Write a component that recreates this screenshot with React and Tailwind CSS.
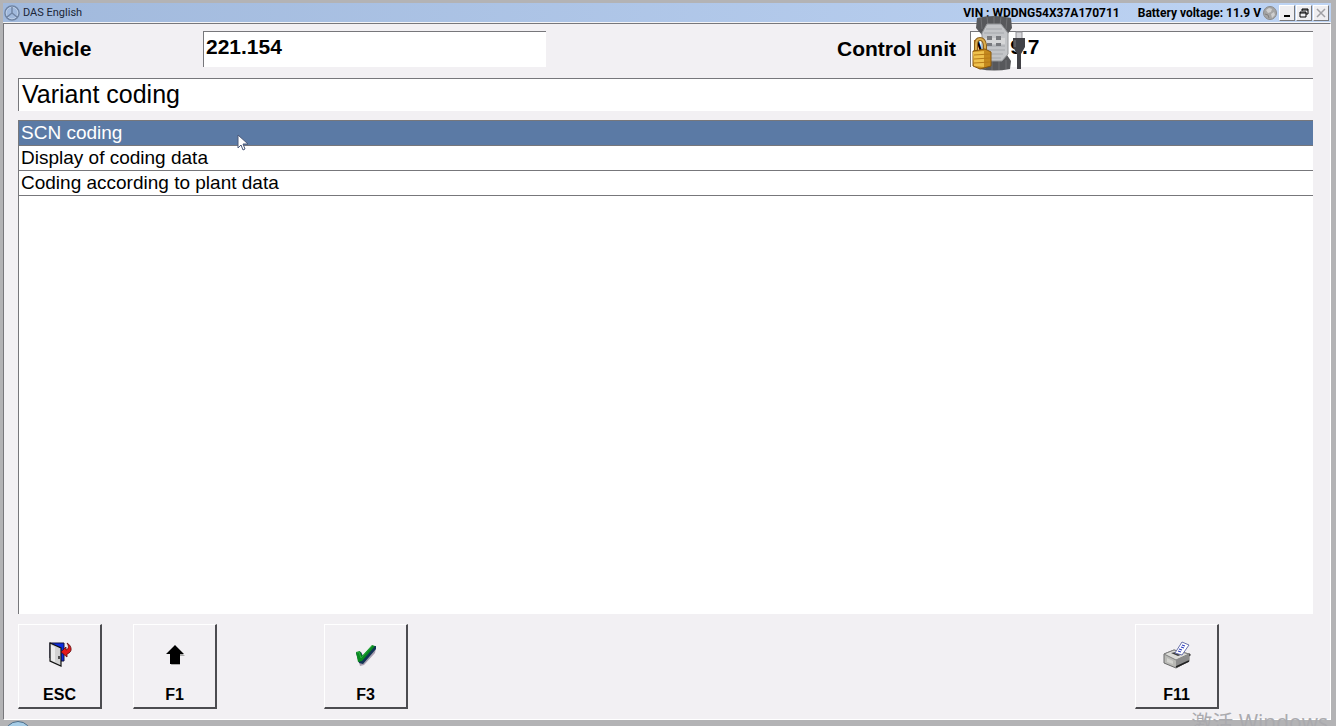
import React, { useState } from 'react';

const entries = ['SCN coding', 'Display of coding data', 'Coding according to plant data'];

const StarIcon = () => (
    <svg width="16" height="16" viewBox="0 0 16 16" fill="none" aria-hidden="true">
        <circle cx="8" cy="8" r="7" stroke="#6f83a2" strokeWidth="1.5" />
        <circle cx="8" cy="8" r="5.8" stroke="#c3d3e8" strokeWidth="0.8" />
        <path d="M8 2v6M8 8l-5 4M8 8l5 4" stroke="#6f83a2" strokeWidth="1.4" />
    </svg>
);

const GlobeIcon = () => (
    <svg width="14" height="14" viewBox="0 0 14 14" aria-hidden="true">
        <circle cx="7" cy="7" r="6.5" fill="#a5a5a5" stroke="#8b8b8b" />
        <path d="M3 4l3-2 3 1-1 3-3 1zM8 8l3-2 1 3-3 3z" fill="#cfcfcf" />
        <path d="M2 8l3 1 1 3" stroke="#818181" fill="none" />
    </svg>
);

const DoorIcon = () => (
    <svg width="24" height="26" viewBox="0 0 24 26" aria-hidden="true">
        <path d="M2 1h14v18h-4L2 16z" fill="#0b2be0" stroke="#14143c" />
        <path d="M2 1l11 5v18L2 19z" fill="#d2d2d2" stroke="#111" strokeWidth="1.2" />
        <path d="M3 3l4 2v15l-4-2z" fill="#ececec" />
        <path d="M11 14v3" stroke="#222" strokeWidth="1.5" />
        <path d="M19 1c5 3 6 9 0 11v3l-6-5 5-5v3c3-1 3-4 1-7z" fill="#e3191c" stroke="#5a0b0b" strokeWidth="0.8" />
    </svg>
);

const UpIcon = () => (
    <svg width="20" height="22" viewBox="0 0 20 22" aria-hidden="true">
        <path d="M11 3l9 9h-5v9H6z" fill="#aaa" />
        <path d="M10 1l9 9h-4v10H5V10H1z" fill="#000" />
    </svg>
);

const CheckIcon = () => (
    <svg width="24" height="24" viewBox="0 0 24 24" aria-hidden="true">
        <path d="M3 11l4-1 2 4L19 4l3 1-1 5L10 22l-4 1z" fill="#a99fb0" />
        <path d="M2 10l5-1 2 4L18 3h4v3L9 21l-4-1z" fill="#123456" />
        <path d="M2 9l4-1 2 5L18 2l3 1L8 18l-4 1z" fill="#0a8a20" />
        <path d="M3 10l2-1 2 6L18 3" fill="none" stroke="#27ab3c" />
    </svg>
);

const PrinterIcon = () => (
    <svg width="28" height="28" viewBox="0 0 28 28" aria-hidden="true">
        <path d="M26 12l2 2-4 3z" fill="#333" />
        <path d="M1 13l10-4 15 4v7l-13 7-12-5z" fill="#b9b9b5" stroke="#6a6a6a" />
        <path d="M1 13l10-4 15 4-13 6z" fill="#dcdcd8" stroke="#808080" />
        <path d="M13 19l13-6v7l-13 7z" fill="#8b8b8b" />
        <path d="M4 17l6 3v3l-6-2z" fill="#d2d2ce" />
        <path d="M13 26l13-6" stroke="#222" strokeWidth="1.5" />
        <path d="M8 12l5-1 7 2-5 2z" fill="#3c3c3c" />
        <path d="M12 12l7-11 7 3-7 10z" fill="#fff" stroke="#6a72ac" />
        <path d="M19 4l3 1M18 6l3 1M16 8l3 1M15 10l3 1" stroke="#2f3fc0" strokeWidth="1.2" />
    </svg>
);

const AdapterIcon = () => (
    <svg width="54" height="56" viewBox="0 0 54 56" aria-hidden="true">
        <path d="M5 3q17-4 34 0l1 10-5 7v20l4 6-1 8q-16 3-31 0l-1-8 4-6V20L4 13z" fill="#57585b" />
        <path d="M9 3l1 11M15 2l1 8M22 1v9M29 2l-1 8M35 3l-1 11M13 45v9M20 46v9M27 46v9M34 45v9" stroke="#707174" />
        <path d="M15 9h14l7 9v21l-6 7H15l-5-7V18z" fill="#c3c5c8" stroke="#929497" />
        <path d="M14 14h16M12 18h20M12 31h21M12 35h21M13 39h18M16 43h13" stroke="#a4a7ab" />
        <path d="M12 23h21v6H12z" fill="#d6d7d8" />
        <path d="M15 21h5v4h-5zM24 21h5v4h-5zM15 28h5v3h-5zM24 28h5v3h-5z" fill="#77797d" />
        <path d="M4 37v-7q0-6 4-6t5 6v7" fill="none" stroke="#8c601c" strokeWidth="4" />
        <path d="M4 37v-7q0-6 4-6t5 6v7" fill="none" stroke="#dcae4c" strokeWidth="2" />
        <path d="M1 36l12-2 6 3v14l-11 3-7-3z" fill="#c4891e" stroke="#86570e" />
        <path d="M1 37l11-1v16l-10-1z" fill="#efc24d" />
        <path d="M2 40l16-1M2 44l16-1M2 48l16-1" stroke="#b77b18" />
        <path d="M44 17h6v7h-6z" fill="#d4d4d8" stroke="#929298" />
        <path d="M41 23h12v9l-4 7v15h-4V39l-4-7z" fill="#424247" />
        <path d="M43 25v7" stroke="#78787d" />
    </svg>
);

const MouseCursor = () => (
    <svg width="12" height="18" viewBox="0 0 12 18" aria-hidden="true">
        <path d="M1 1v13l3-3 2 5 2-1-2-5h5z" fill="#fff" stroke="#4a5878" />
    </svg>
);

const KeyButton = ({ label, icon, className = '' }) => (
    <button
        type="button"
        className={`flex h-[85px] w-[84px] shrink-0 flex-col items-center border-t border-l border-r-2 border-b-2 border-t-white border-l-white border-r-[#4c4c50] border-b-[#4c4c50] pt-3 text-[16px] leading-5 font-bold ${className}`}
    >
        <span className="flex h-9 items-center justify-center">{icon}</span>
        <span className="mt-3">{label}</span>
    </button>
);

const TitleButton = ({ label, children }) => (
    <button
        type="button"
        aria-label={label}
        className="flex h-4 w-4 items-center justify-center border border-t-white border-r-[#77777b] border-b-[#77777b] border-l-white bg-[#efeef1]"
    >
        {children}
    </button>
);

const App = () => {
    const [selected, setSelected] = useState(0);

    return (
        <div className="relative flex h-screen flex-col overflow-hidden bg-[#b3b3b5] pt-[3px] pr-[5px] pb-[6px] pl-[3px] font-['Liberation_Sans',Arial,sans-serif] text-black">
            <header className="flex h-5 shrink-0 items-center border-b border-[#f4f4f6] bg-linear-to-r from-[#a1b9dc] to-[#bed4f4] pl-px">
                <StarIcon />
                <h1 className="ml-[3px] font-['Roboto',sans-serif] text-[11px] leading-4 text-[#1b2638]">DAS English</h1>
                <div className="ml-auto flex items-center font-['Roboto',sans-serif] text-[12px] leading-4 font-bold">
                    <span>VIN : WDDNG54X37A170711</span>
                    <span className="ml-[18px]">Battery voltage: 11.9 V</span>
                </div>
                <div className="mr-0.5 ml-0.5 flex items-center">
                    <GlobeIcon />
                    <div className="ml-0.5 flex gap-px">
                        <TitleButton label="Minimize">
                            <svg width="10" height="10" viewBox="0 0 10 10"><path d="M2 8h6" stroke="#000" strokeWidth="2" /></svg>
                        </TitleButton>
                        <TitleButton label="Restore">
                            <svg width="10" height="10" viewBox="0 0 10 10" fill="none" stroke="#000"><path d="M3 3V1h6v5H7M3 2h6M1 4h6v5H1zM1 5h6" /></svg>
                        </TitleButton>
                        <TitleButton label="Close">
                            <svg width="10" height="10" viewBox="0 0 10 10"><path d="M1 1l8 8M9 1L1 9" stroke="#a0a0a5" strokeWidth="1.5" /></svg>
                        </TitleButton>
                    </div>
                </div>
            </header>

            <main className="flex min-h-0 flex-1 flex-col border border-t-[#77777b] border-r-white border-b-white border-l-[#77777b] bg-[#f2f0f3] px-3.5 pt-[7px] pb-[10px]">
                <div className="mr-[3px] flex text-[21px] leading-6 font-bold">
                    <label htmlFor="vehicle" className="w-[185px] pt-1.5 pl-px">Vehicle</label>
                    <input id="vehicle" readOnly value="221.154" className="h-9 w-[343px] border-t border-l border-[#77777b] bg-white px-0.5 pb-1.5 outline-none" />
                    <label htmlFor="unit" className="ml-auto pt-1.5 pr-3.5">Control unit</label>
                    <div className="relative">
                        <input id="unit" readOnly value="ME 9.7" className="h-9 w-[343px] border-t border-l border-[#77777b] bg-white px-0.5 pb-1.5 outline-none" />
                        <div className="pointer-events-none absolute -top-4 left-0.5">
                            <AdapterIcon />
                        </div>
                    </div>
                </div>

                <h2 className="mt-[11px] mr-[3px] h-[33px] shrink-0 border-t border-l border-[#77777b] bg-white pl-[3px] text-[25px] leading-[30px]">Variant coding</h2>

                <div className="relative mt-[9px] mr-[3px] min-h-0 flex-1 border-t border-l border-[#77777b] bg-white">
                    <ul className="text-[19px] leading-6">
                        {entries.map((entry, index) => (
                            <li key={entry} className="border-b border-[#77777b]">
                                <button
                                    type="button"
                                    onClick={() => setSelected(index)}
                                    className={`block w-full pl-0.5 text-left ${index === selected ? 'bg-[#5b7aa5] text-white' : 'text-black'}`}
                                >
                                    {entry}
                                </button>
                            </li>
                        ))}
                    </ul>
                    <div className="pointer-events-none absolute top-[13px] left-[218px]">
                        <MouseCursor />
                    </div>
                </div>

                <nav className="mt-[10px] flex shrink-0">
                    <KeyButton label="ESC" icon={<DoorIcon />} />
                    <KeyButton label="F1" icon={<UpIcon />} className="ml-[31px]" />
                    <KeyButton label="F3" icon={<CheckIcon />} className="ml-[107px]" />
                    <KeyButton label="F11" icon={<PrinterIcon />} className="mr-[97px] ml-auto" />
                </nav>
            </main>

            <p className="absolute right-2 -bottom-2 font-['Open_Sans','Noto_Sans_CJK_SC',sans-serif] text-[21px] leading-6 text-[#aaaaae]">激活 Windows</p>
            <div className="absolute top-[calc(100%-5px)] left-1 h-7 w-7 rounded-full border border-[#4c6c87] bg-[#a6cce6]" />
        </div>
    );
};

export default App;
